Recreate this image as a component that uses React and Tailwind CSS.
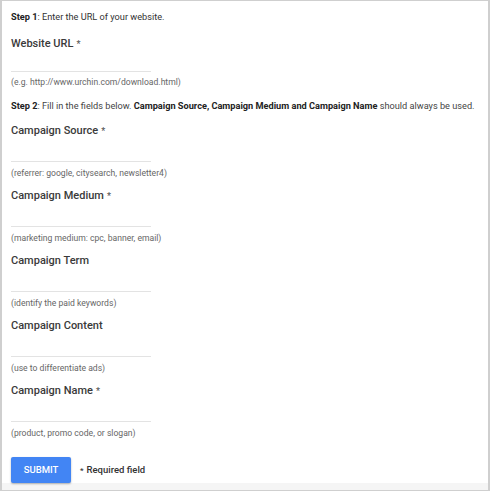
const fields = [
  { label: 'Campaign Source', required: true, hint: '(referrer: google, citysearch, newsletter4)' },
  { label: 'Campaign Medium', required: true, hint: '(marketing medium: cpc, banner, email)' },
  { label: 'Campaign Term', required: false, hint: '(identify the paid keywords)' },
  { label: 'Campaign Content', required: false, hint: '(use to differentiate ads)' },
  { label: 'Campaign Name', required: true, hint: '(product, promo code, or slogan)' },
]

function Label({ text, required }) {
  return (
    <p className="text-[11px] font-medium leading-[16px] text-[#3a3a3a]">
      {text}
      {required ? <span className="ml-[3px] text-[9px] text-[#555]">*</span> : null}
    </p>
  )
}

function Field({ label, required, hint }) {
  return (
    <div className="h-[65px] pt-[1px]">
      <Label text={label} required={required} />
      <div className="mt-[22px] h-[1px] w-[140px] bg-[#e3e3e3]" />
      <p className="mt-[4px] text-[8.6px] leading-[14px] text-[#666]">{hint}</p>
    </div>
  )
}

export default function App() {
  return (
    <div className="h-[491px] w-[490px] bg-white" style={{ fontFamily: 'Roboto, "Noto Sans", sans-serif' }}>
      <div className="flex h-full flex-col border-x-2 border-t border-b border-[#cfcfcf]">
        <div className="flex-1 px-[9px] pt-[9px]">
          <p className="text-[9.2px] leading-[14px] text-[#333]">
            <span className="font-bold text-[#222]">Step 1</span>: Enter the URL of your website.
          </p>
          <div className="mt-[12px]">
            <Label text="Website URL" required />
            <div className="mt-[19px] h-[1px] w-[140px] bg-[#e3e3e3]" />
            <p className="mt-[3px] text-[8.6px] leading-[14px] text-[#666]">(e.g. http://www.urchin.com/download.html)</p>
          </div>
          <p className="mt-[10px] whitespace-nowrap text-[9.2px] leading-[14px] text-[#444]">
            <span className="font-bold text-[#222]">Step 2</span>: Fill in the fields below.{' '}
            <span className="font-bold text-[#222]">Campaign Source, Campaign Medium and Campaign Name</span> should always be used.
          </p>
          <div className="mt-[9px]">
            {fields.map((f) => (
              <Field key={f.label} {...f} />
            ))}
          </div>
          <div className="relative z-10 mt-[10px] flex items-center gap-[9px]">
            <button className="h-[26px] w-[60px] rounded-[2px] bg-[#4285f4] text-[9.5px] font-medium text-white shadow-[0_1px_2px_rgba(0,0,0,0.3)]">
              SUBMIT
            </button>
            <span className="text-[9.5px] font-medium text-[#333]">
              <span className="mr-[3px] text-[8px]">*</span>Required field
            </span>
          </div>
        </div>
        <div className="h-[12px] bg-[#f5f5f5]" />
      </div>
    </div>
  )
}
